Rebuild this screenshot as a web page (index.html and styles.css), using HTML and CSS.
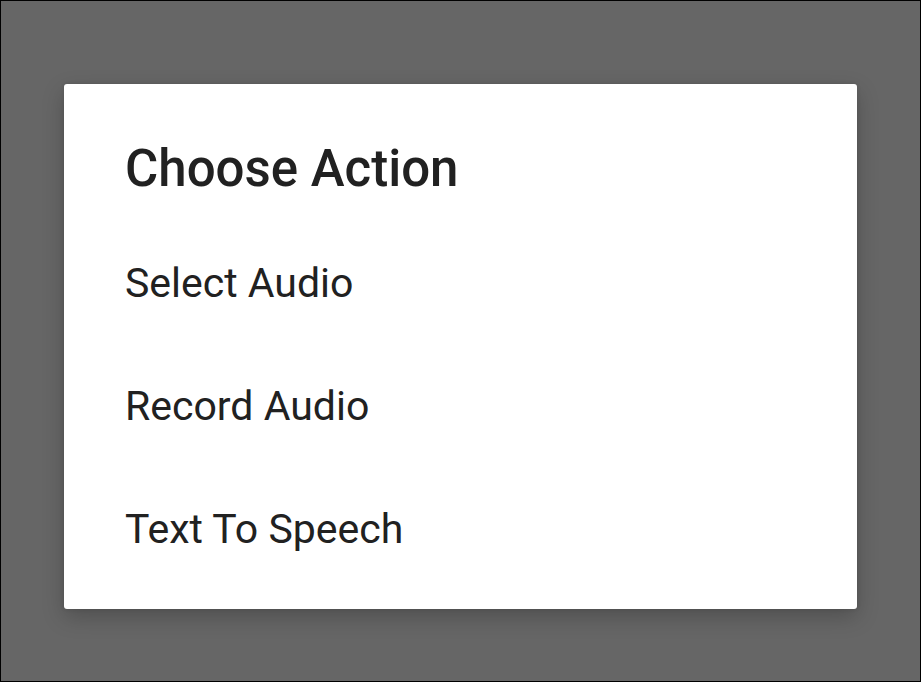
FILE: index.html
```html
<!DOCTYPE html>
<html lang="en">
<head>
<meta charset="utf-8">
<title>Choose Action</title>
<link rel="stylesheet" href="styles.css">
</head>
<body>
  <div class="dialog">
    <h1 class="dialog-title">Choose Action</h1>
    <ul class="action-list">
      <li class="action-item">Select Audio</li>
      <li class="action-item">Record Audio</li>
      <li class="action-item">Text To Speech</li>
    </ul>
  </div>
</body>
</html>
```
FILE: styles.css
```css
html, body {
  margin: 0;
  padding: 0;
}
body {
  box-sizing: border-box;
  height: 100vh;
  border: 1px solid #000;
  background: #666666;
  padding: 83px 63px 0;
  font-family: Roboto, "Noto Sans", sans-serif;
  overflow: hidden;
}
.dialog {
  background: #ffffff;
  border-radius: 3px;
  height: 525px;
  box-sizing: border-box;
  padding: 55px 0 18px 61px;
  box-shadow: 0 8px 22px rgba(0, 0, 0, 0.22), 0 0 4px rgba(0, 0, 0, 0.12);
}
.dialog-title {
  margin: 0 0 23px;
  font-size: 51px;
  font-weight: 500;
  line-height: 60px;
  color: #212121;
}
.action-list {
  list-style: none;
  margin: 0;
  padding: 0;
}
.action-item {
  font-size: 41px;
  line-height: 123px;
  height: 123px;
  color: #212121;
}
```
